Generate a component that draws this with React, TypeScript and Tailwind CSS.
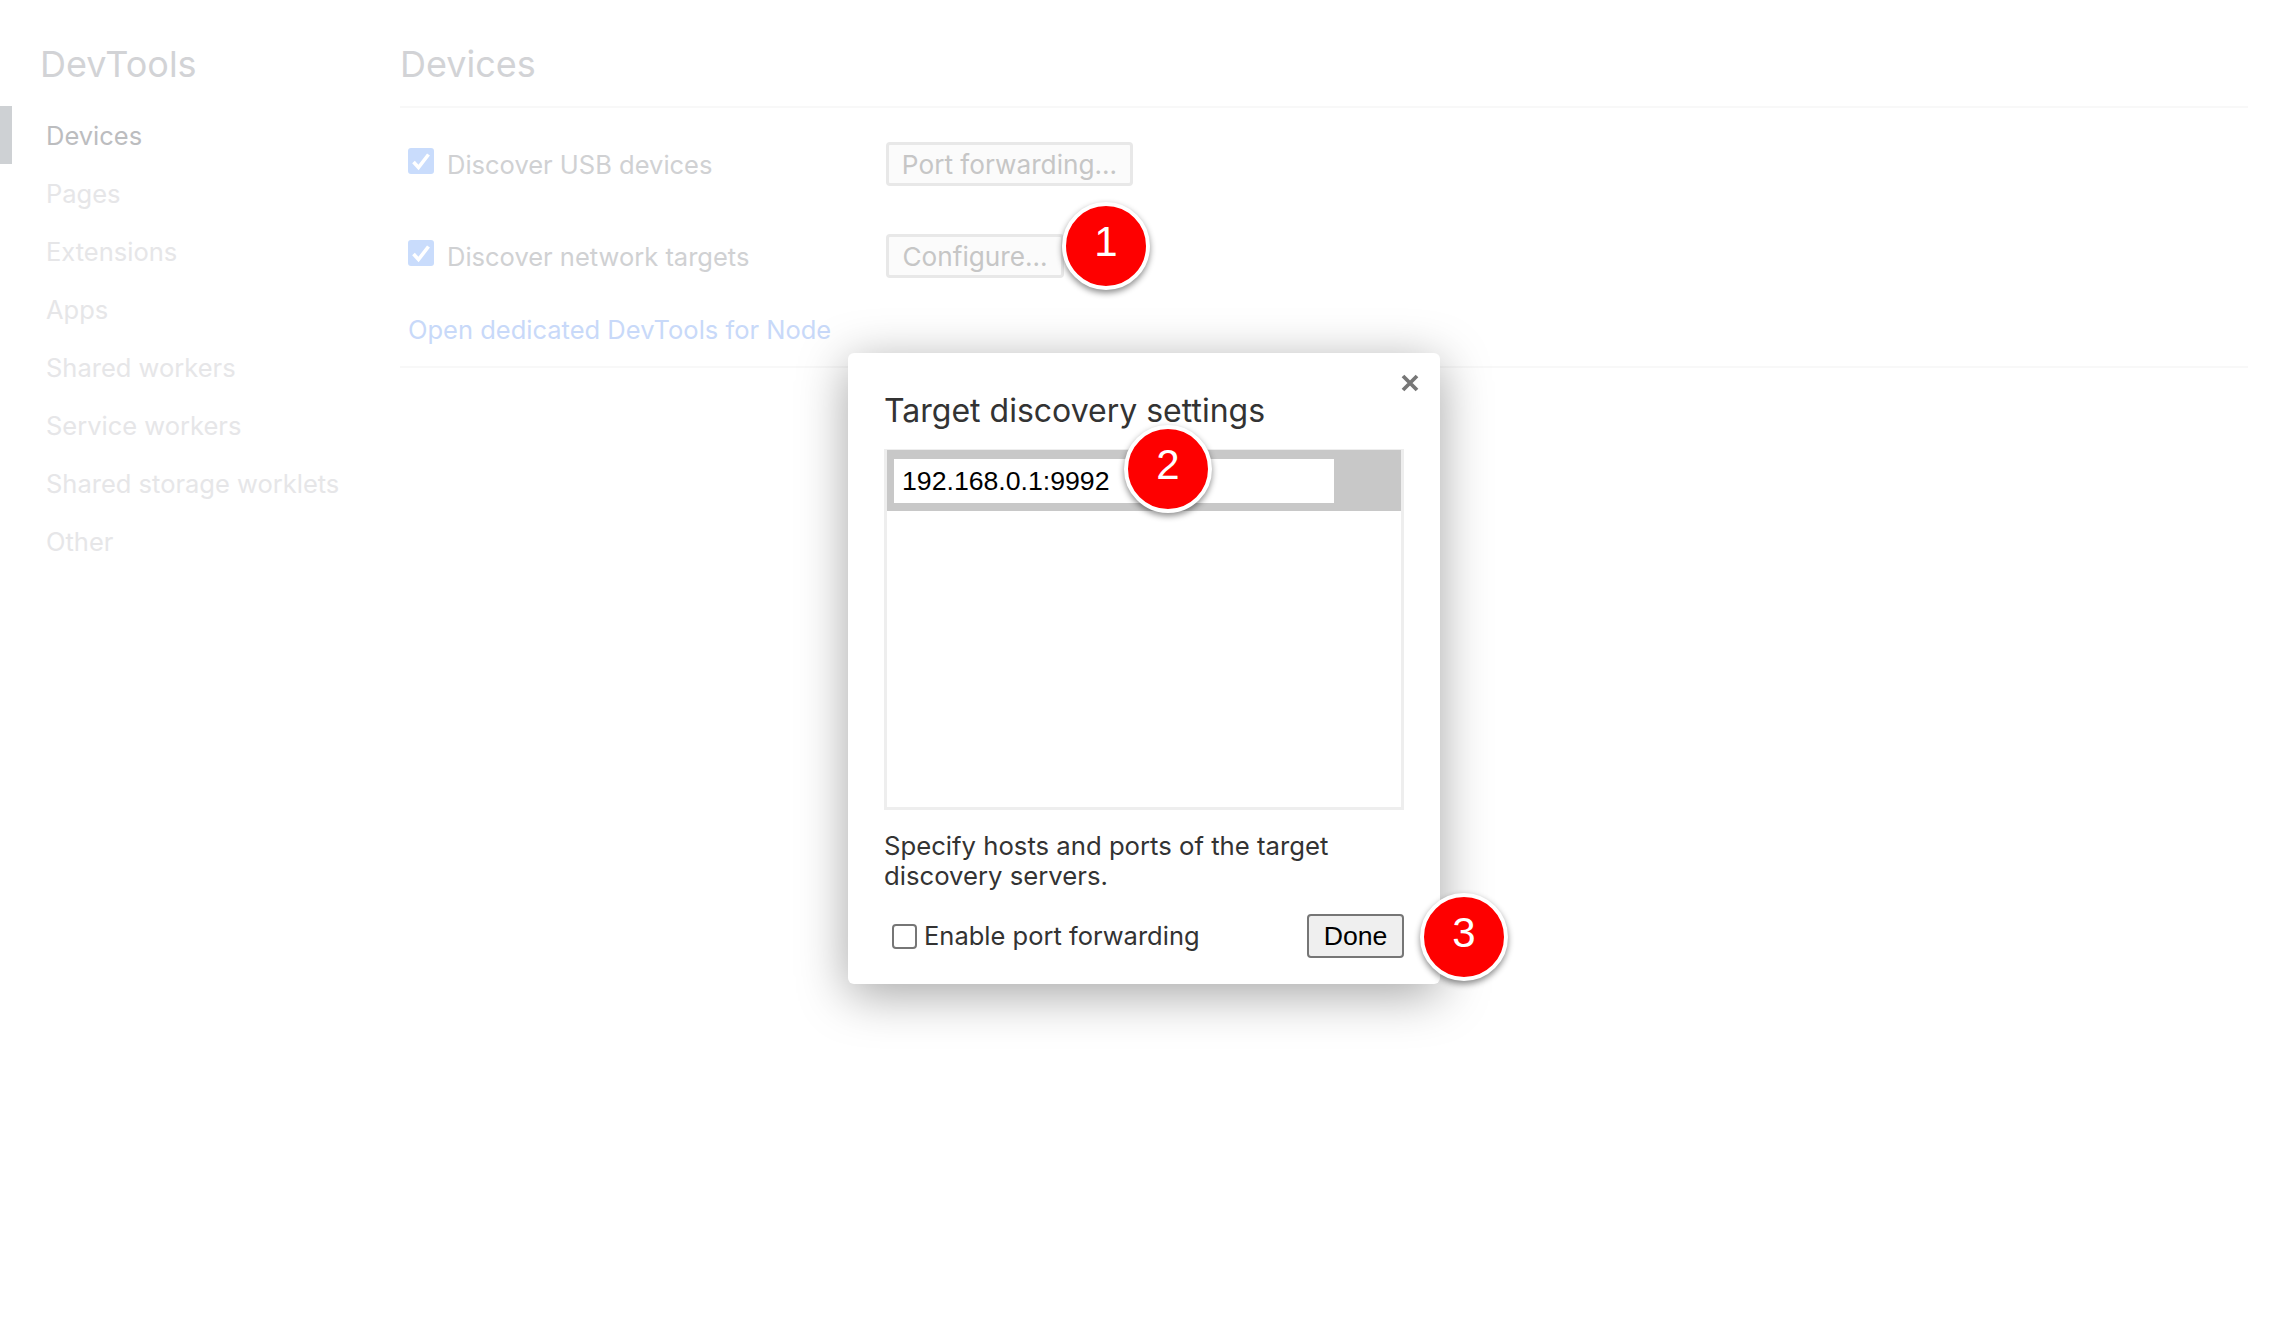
const font = "font-['Inter','Noto_Sans',sans-serif]";

function Badge({ n, className }: { n: string; className: string }) {
  return (
    <div
      className={`absolute w-[88px] h-[88px] rounded-full bg-[#fe0000] border-[4px] border-white shadow-[0_3px_6px_rgba(0,0,0,0.45)] flex items-center justify-center text-white text-[42px] leading-none font-['Liberation_Sans',sans-serif] pb-[8px] ${className}`}
    >
      {n}
    </div>
  );
}

function Check() {
  return (
    <span className="mt-[6px] w-[26px] h-[26px] rounded-[3px] bg-[#c9dcfc] flex items-center justify-center shrink-0">
      <svg width="26" height="26" viewBox="0 0 26 26" fill="none">
        <path d="M5.5 14 L10.5 19.5 L20.5 6.5" stroke="white" strokeWidth="3.6" />
      </svg>
    </span>
  );
}

const nav = ["Pages", "Extensions", "Apps", "Shared workers", "Service workers", "Shared storage worklets", "Other"];

export default function App() {
  return (
    <div className={`relative w-[2288px] h-[1336px] bg-white overflow-hidden flex ${font}`}>
      <aside className="w-[400px] shrink-0">
        <h1 className="pl-[40px] pt-[40px] h-[106px] text-[36px] leading-[48px] font-normal text-[#d2d3d6]">DevTools</h1>
        <ul className="text-[25.5px]">
          <li className="relative h-[58px] pl-[46px] pt-[2px] flex items-center text-[#bcbdbf]">
            <span className="absolute left-0 top-0 bottom-0 w-[12px] bg-[#ced1d4]" />
            Devices
          </li>
          {nav.map((t) => (
            <li key={t} className="h-[58px] pl-[46px] pt-[2px] flex items-center text-[#e6e6e8]">
              {t}
            </li>
          ))}
        </ul>
      </aside>
      <main className="flex-1 pr-[40px]">
        <h2 className="pt-[40px] h-[108px] text-[36px] leading-[48px] font-normal text-[#d2d3d6] border-b-[2px] border-[#f8f8f8]">Devices</h2>
        <div className="pl-[8px] h-[260px] border-b-[2px] border-[#f8f8f8] text-[25.5px] text-[#d0d1d3]">
          <div className="flex items-start h-[92px] pt-[34px]">
            <div className="flex items-start w-[478px] gap-[13px]">
              <Check />
              <span className="mt-[7px] leading-[32px]">Discover USB devices</span>
            </div>
            <button className="h-[44px] w-[247px] border-[3px] border-[#e8e8e8] rounded-[4px] bg-[#fbfbfb] text-[26.2px] text-[#c6c6c6]">Port forwarding...</button>
          </div>
          <div className="flex items-start h-[84px] pt-[34px]">
            <div className="flex items-start w-[478px] gap-[13px]">
              <Check />
              <span className="mt-[7px] leading-[32px]">Discover network targets</span>
            </div>
            <button className="h-[44px] w-[178px] border-[3px] border-[#e8e8e8] rounded-[4px] bg-[#fbfbfb] text-[26.2px] text-[#c6c6c6]">Configure...</button>
          </div>
          <a className="block pt-[30px] text-[#c8d9f9] leading-[32px]">Open dedicated DevTools for Node</a>
        </div>
      </main>

      <section className="absolute left-[848px] top-[353px] w-[592px] h-[631px] bg-white rounded-[6px] shadow-[0_10px_50px_rgba(0,0,0,0.36)] px-[36px] text-[#333333]">
        <svg className="absolute right-[21px] top-[21px]" width="18" height="18" viewBox="0 0 18 18">
          <path d="M2 2 L16 16 M16 2 L2 16" stroke="#777" strokeWidth="3.8" />
        </svg>
        <h3 className="pt-[38px] h-[96px] text-[32px] leading-[40px] font-normal text-[#333]">Target discovery settings</h3>
        <div className="w-[520px] h-[361px] border-[3px] border-[#eeeeee] border-t-[1px]">
          <div className="h-[61px] bg-[#c8c8c8] pl-[7px] pt-[9px]">
            <div className="w-[440px] h-[44px] bg-white pl-[8px] text-black text-[26.67px] leading-[44px] font-['Liberation_Sans',sans-serif]">192.168.0.1:9992</div>
          </div>
        </div>
        <p className="mt-[21px] text-[25.7px] leading-[30px] text-[#333]">Specify hosts and ports of the target<br />discovery servers.</p>
        <div className="mt-[23px] flex items-center justify-between">
          <label className="flex items-center pl-[8px] gap-[7px] text-[25.5px]">
            <span className="w-[25px] h-[25px] rounded-[4px] border-[2px] border-[#767676] bg-white" />
            Enable port forwarding
          </label>
          <button className="w-[97px] h-[44px] bg-[#efefef] border-[2px] border-[#767676] rounded-[4px] text-black text-[26.67px] font-['Liberation_Sans',sans-serif]">Done</button>
        </div>
      </section>

      <Badge n="1" className="left-[1062px] top-[202px]" />
      <Badge n="2" className="left-[1124px] top-[425px]" />
      <Badge n="3" className="left-[1420px] top-[893px]" />
    </div>
  );
}
